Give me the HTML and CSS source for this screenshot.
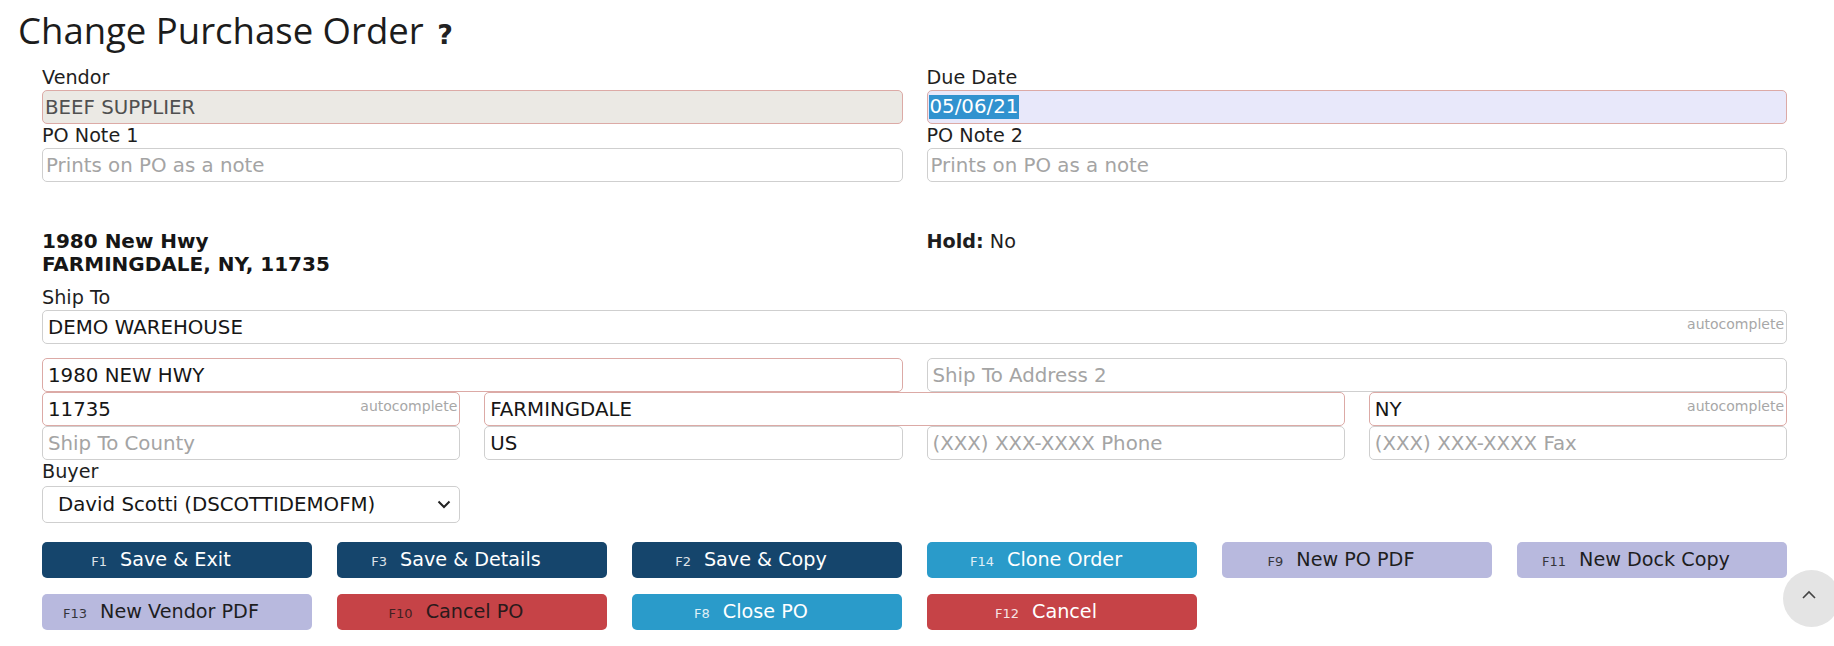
FILE: index.html
```html
<!DOCTYPE html>
<html lang="en">
<head>
<meta charset="utf-8">
<title>Change Purchase Order</title>
<link rel="stylesheet" href="styles.css">
</head>
<body>
<div class="page">
  <h1 class="title">Change Purchase Order <span class="help">?</span></h1>

  <div class="grid2">
    <div class="field">
      <label class="lbl">Vendor</label>
      <input class="inp req vendor" type="text" value="BEEF SUPPLIER" readonly>
    </div>
    <div class="field">
      <label class="lbl">Due Date</label>
      <div class="inp req due"><span class="sel">05/06/21</span></div>
    </div>
    <div class="field">
      <label class="lbl">PO Note 1</label>
      <input class="inp tight" type="text" placeholder="Prints on PO as a note">
    </div>
    <div class="field">
      <label class="lbl">PO Note 2</label>
      <input class="inp tight" type="text" placeholder="Prints on PO as a note">
    </div>
  </div>

  <div class="grid2 addr">
    <div class="addr-text">1980 New Hwy<br>FARMINGDALE, NY, 11735</div>
    <div class="hold"><b>Hold:</b> No</div>
  </div>

  <div class="field shipto">
    <label class="lbl">Ship To</label>
    <div class="ac">
      <input class="inp" type="text" value="DEMO WAREHOUSE">
      <span class="hint">autocomplete</span>
    </div>
  </div>

  <div class="grid4">
    <input class="inp req span2" type="text" value="1980 NEW HWY">
    <input class="inp span2" type="text" placeholder="Ship To Address 2">

    <div class="ac">
      <input class="inp req" type="text" value="11735">
      <span class="hint">autocomplete</span>
    </div>
    <input class="inp req span2" type="text" value="FARMINGDALE">
    <div class="ac">
      <input class="inp req" type="text" value="NY">
      <span class="hint">autocomplete</span>
    </div>

    <input class="inp" type="text" placeholder="Ship To County">
    <input class="inp" type="text" value="US">
    <input class="inp" type="text" placeholder="(XXX) XXX-XXXX Phone">
    <input class="inp" type="text" placeholder="(XXX) XXX-XXXX Fax">
  </div>

  <div class="grid4 buyer-row">
    <div class="field">
      <label class="lbl">Buyer</label>
      <div class="selwrap">
        <select class="select">
          <option>David Scotti (DSCOTTIDEMOFM)</option>
        </select>
        <svg class="chev" width="14" height="9" viewBox="0 0 14 9"><path d="M1.5 1.5 L7 7 L12.5 1.5" fill="none" stroke="#222" stroke-width="2"/></svg>
      </div>
    </div>
  </div>

  <div class="buttons">
    <button class="btn navy"><span class="key">F1</span>Save &amp; Exit</button>
    <button class="btn navy"><span class="key">F3</span>Save &amp; Details</button>
    <button class="btn navy"><span class="key">F2</span>Save &amp; Copy</button>
    <button class="btn cyan"><span class="key">F14</span>Clone Order</button>
    <button class="btn lav"><span class="key">F9</span>New PO PDF</button>
    <button class="btn lav"><span class="key">F11</span>New Dock Copy</button>
    <button class="btn lav"><span class="key">F13</span>New Vendor PDF</button>
    <button class="btn red dark"><span class="key">F10</span>Cancel PO</button>
    <button class="btn cyan"><span class="key">F8</span>Close PO</button>
    <button class="btn red"><span class="key">F12</span>Cancel</button>
  </div>
</div>

<a class="totop" href="#">
  <svg width="18" height="12" viewBox="0 0 18 12"><path d="M3 9 L9 3 L15 9" fill="none" stroke="#444" stroke-width="1.6"/></svg>
</a>
</body>
</html>
```

FILE: styles.css
```css
* { box-sizing: border-box; }

html, body {
  margin: 0;
  background: #ffffff;
}

body {
  font-family: "DejaVu Sans", Verdana, sans-serif;
  font-size: 19.2px;
  color: #1e1e1e;
  overflow: hidden;
}

.page {
  padding: 6px 47px 0 42px;
}

.title {
  margin: 0 0 7px -24px;
  font-family: "Open Sans", "Noto Sans", sans-serif;
  font-weight: 400;
  font-size: 36.5px;
  line-height: 48px;
  color: #1c1c1c;
}

.help {
  font-family: "DejaVu Sans", sans-serif;
  font-weight: 700;
  font-size: 27px;
  margin-left: 4px;
  color: #222;
}

.grid2 {
  display: grid;
  grid-template-columns: 1fr 1fr;
  column-gap: 24px;
}

.field {
  display: flex;
  flex-direction: column;
}

.lbl {
  display: block;
  line-height: 24px;
  color: #1e1e1e;
}

.inp {
  display: block;
  width: 100%;
  height: 34px;
  margin: 0;
  padding: 0 5px;
  border: 1px solid #cfcfcf;
  border-radius: 5px;
  background: #ffffff;
  font-family: "DejaVu Sans", Verdana, sans-serif;
  font-size: 19.8px;
  color: #161616;
  outline: none;
}

.inp::placeholder { color: #a4a4a4; }

.inp.tight { padding-left: 3px; }

.inp.req { border-color: #dcaaa6; }

.vendor {
  background: #ebe9e4;
  color: #505050;
  padding-left: 2px;
}

.due {
  background: #e8e8fa;
  display: flex;
  align-items: center;
  padding-left: 1px;
}

.due .sel {
  background: #3192cf;
  color: #ffffff;
  line-height: 24px;
  padding: 0 1px;
}

.addr {
  margin-top: 48px;
  line-height: 23px;
}

.addr-text {
  font-weight: 700;
  font-size: 20px;
  color: #161616;
}

.hold b { font-weight: 700; }

.shipto { margin-top: 10px; }

.ac { position: relative; }

.hint {
  position: absolute;
  right: 3px;
  top: 6px;
  font-size: 14px;
  line-height: 16px;
  color: #a7a7a7;
  pointer-events: none;
}

.grid4 {
  display: grid;
  grid-template-columns: repeat(4, 1fr);
  column-gap: 24px;
  row-gap: 0;
  margin-top: 14px;
}

.span2 { grid-column: span 2; }

.buyer-row { margin-top: 0; }

.selwrap {
  position: relative;
  margin-top: 2px;
}

.select {
  display: block;
  width: 100%;
  height: 37px;
  padding: 0 40px 0 15px;
  border: 1px solid #cfcfcf;
  border-radius: 5px;
  background: #ffffff;
  font-family: "DejaVu Sans", Verdana, sans-serif;
  font-size: 19.8px;
  color: #161616;
  appearance: none;
  -webkit-appearance: none;
  outline: none;
}

.chev {
  position: absolute;
  right: 9px;
  top: 14px;
  pointer-events: none;
}

.buttons {
  display: grid;
  grid-template-columns: repeat(6, 1fr);
  column-gap: 25px;
  row-gap: 16px;
  margin-top: 19px;
}

.btn {
  height: 36px;
  border: none;
  border-radius: 5px;
  padding: 0 32px 0 0;
  display: flex;
  align-items: baseline;
  justify-content: center;
  font-family: "DejaVu Sans", Verdana, sans-serif;
  font-size: 19.2px;
  line-height: 36px;
  color: #ffffff;
  cursor: pointer;
}

.key {
  font-size: 13px;
  margin-right: 13px;
  opacity: 0.85;
}

.navy { background: #15456c; }
.cyan { background: #2a9bca; }
.lav  { background: #b8b9de; color: #1e1e1e; }
.red  { background: #c64347; }
.red.dark { color: #2a1a1b; }

.totop {
  position: fixed;
  right: -6px;
  bottom: 19px;
  width: 57px;
  height: 57px;
  border-radius: 50%;
  background: #e4e4e4;
  display: flex;
  align-items: center;
  justify-content: center;
  padding-right: 6px;
  padding-bottom: 8px;
}
```
